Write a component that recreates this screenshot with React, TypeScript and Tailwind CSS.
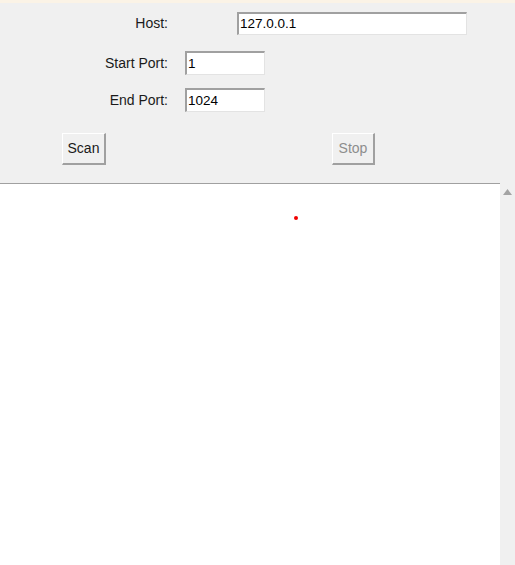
import React from "react";

const font = { fontFamily: '"Liberation Sans", Arial, sans-serif' };

const Field: React.FC<{ value: string; className: string }> = ({ value, className }) => (
    <div
        className={`bg-white border-t-2 border-l-2 border-t-[#a0a0a0] border-l-[#a0a0a0] border-b border-r border-b-[#e3e3e3] border-r-[#e3e3e3] flex items-center pl-[1px] text-[13.5px] text-black leading-none ${className}`}
    >
        {value}
    </div>
);

const Row: React.FC<{ label: string; gap: string; children: React.ReactNode; className?: string }> = ({
    label,
    gap,
    children,
    className,
}) => (
    <div className={`flex items-center ${className ?? ""}`}>
        <div className="w-[168px] text-right text-[14px] text-[#1a1a1a]">{label}</div>
        <div className={gap}>{children}</div>
    </div>
);

const App: React.FC = () => {
    return (
        <div className="w-[515px] h-[565px] bg-[#f0f0f0] flex flex-col overflow-hidden" style={font}>
            <div className="h-[3px] bg-[#fbf3e6]" />

            <Row label="Host:" gap="ml-[69px]" className="mt-[9px]">
                <Field value="127.0.0.1" className="w-[230px] h-[23px]" />
            </Row>
            <Row label="Start Port:" gap="ml-[17px]" className="mt-[16px]">
                <Field value="1" className="w-[80px] h-[24px]" />
            </Row>
            <Row label="End Port:" gap="ml-[17px]" className="mt-[13px]">
                <Field value="1024" className="w-[80px] h-[24px]" />
            </Row>

            <div className="flex mt-[21px] h-[32px]">
                <button className="ml-[62px] w-[44px] h-[32px] bg-[#f0f0f0] border border-t-white border-l-white border-b-2 border-r-2 border-b-[#a0a0a0] border-r-[#a0a0a0] text-[14px] text-[#1a1a1a]">
                    Scan
                </button>
                <button
                    disabled
                    className="ml-[226px] w-[43px] h-[32px] bg-[#f0f0f0] border border-t-white border-l-white border-b-2 border-r-2 border-b-[#a0a0a0] border-r-[#a0a0a0] text-[14px] text-[#8d8d8d]"
                >
                    Stop
                </button>
            </div>

            <div className="mt-[18px] flex flex-1">
                <div className="w-[500px] bg-white border-t border-t-[#a0a0a0] relative">
                    <div className="absolute left-[294px] top-[32px] w-[4px] h-[4px] rounded-full bg-[#f00000]" />
                </div>
                <div className="w-[15px] bg-[#f0f0f0] flex justify-center pt-[6px]">
                    <svg width="9" height="6" viewBox="0 0 9 6">
                        <path d="M4.5 0 L9 6 L0 6 Z" fill="#a3a3a3" />
                    </svg>
                </div>
            </div>
        </div>
    );
};

export default App;
